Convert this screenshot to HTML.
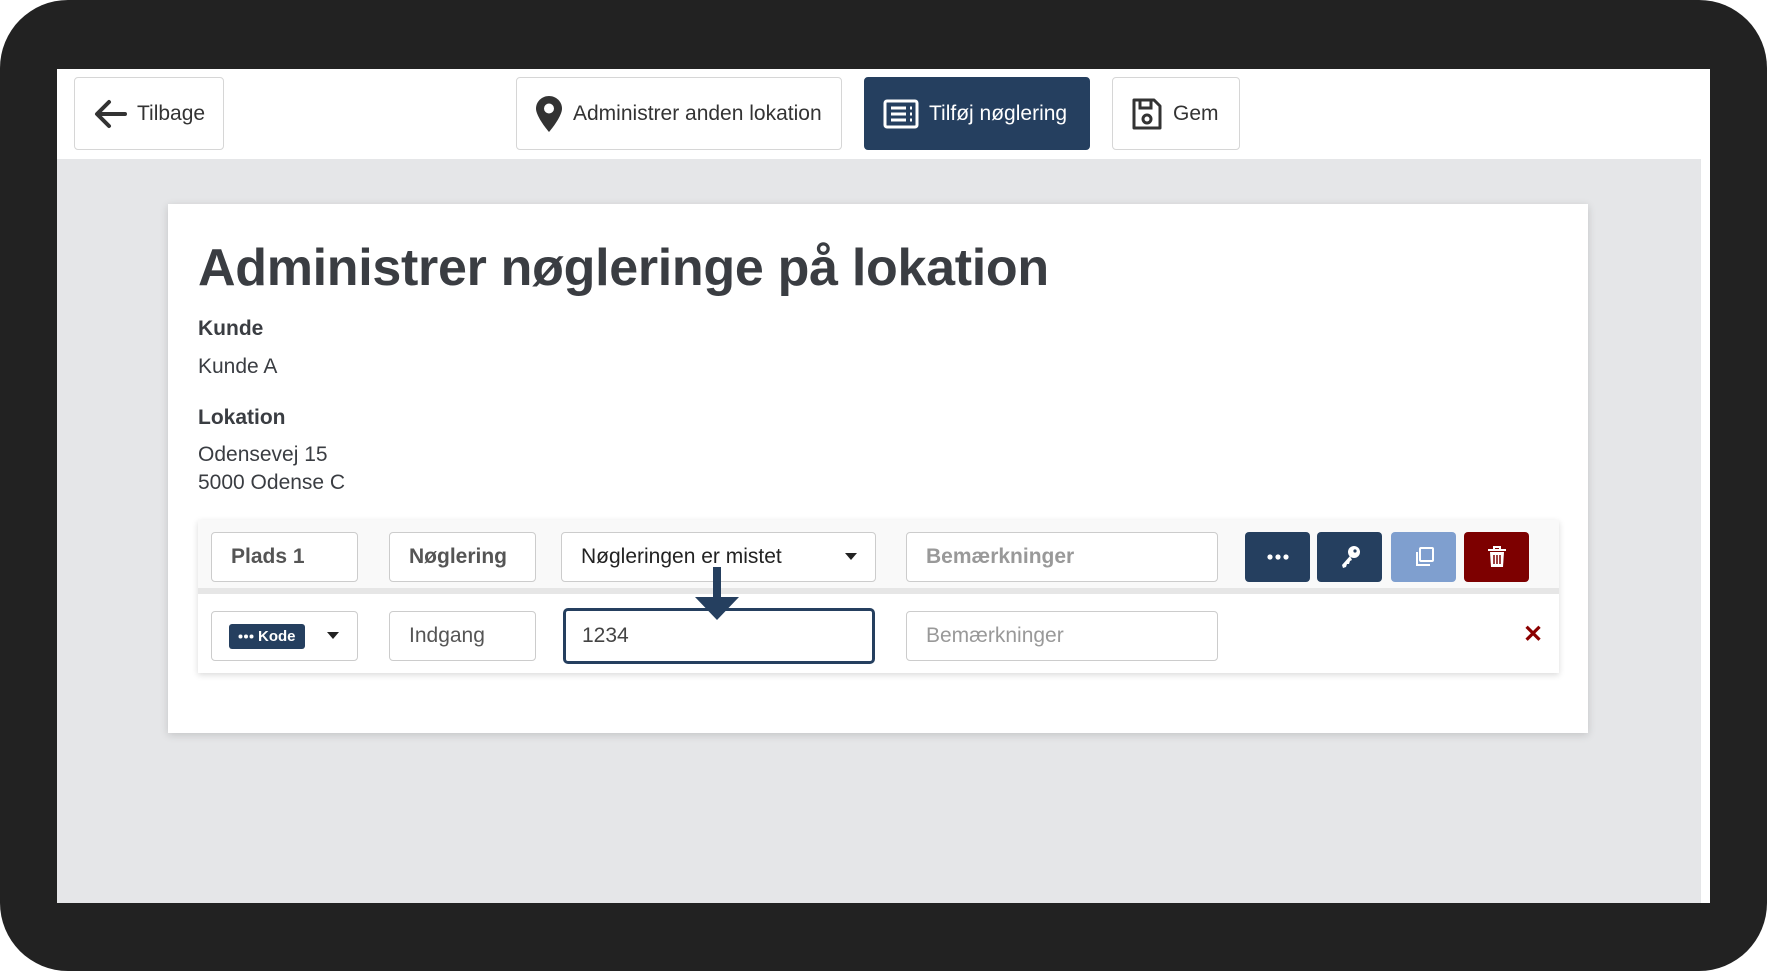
<!DOCTYPE html>
<html><head><meta charset="utf-8"><style>
*{box-sizing:border-box;margin:0;padding:0}
body{width:1767px;height:971px;background:#fff;font-family:"Liberation Sans",Arial,sans-serif;position:relative;overflow:hidden}
.frame{position:absolute;left:0;top:0;width:1767px;height:971px;background:#222;border-radius:68px}
.screen{position:absolute;left:57px;top:69px;width:1653px;height:834px;background:#e5e6e8;overflow:hidden}
.top{position:absolute;left:0;top:0;width:1653px;height:90px;background:#fff}
.rstrip{position:absolute;right:0;top:0;width:9px;height:834px;background:#fff}
.btn{position:absolute;top:8px;height:73px;border:1px solid #d6d6d6;border-radius:4px;background:#fff;display:flex;align-items:center;font-size:21px;color:#333}
.btn svg{margin-right:10px}
.card{position:absolute;left:111px;top:135px;width:1420px;height:529px;background:#fff;box-shadow:0 2px 8px rgba(0,0,0,.15)}
.abs{position:absolute;white-space:nowrap;color:#3a3d42}
.panel{position:absolute;left:30px;top:316px;width:1361px;height:153px;box-shadow:0 2px 6px rgba(0,0,0,.15);background:#fff}
.r1{position:absolute;left:0;top:0;width:1361px;height:74px;background:#f9f9f9;border-bottom:6px solid #e6e6e6}
.inp{position:absolute;height:50px;border:1px solid #ccc;border-radius:4px;background:#fff;display:flex;align-items:center;padding-left:19px;font-size:21px;color:#444}
.ib{position:absolute;top:12px;width:65px;height:50px;border-radius:4px;display:flex;align-items:center;justify-content:center}
</style></head><body>
<div class="frame"></div>
<div class="screen">
 <div class="top"></div>
 <div class="btn" style="left:17px;width:150px;padding-left:18px">
  <svg width="34" height="30" viewBox="0 0 34 30"><path d="M32 15H5M16 3L4 15l12 12" stroke="#333" stroke-width="4" fill="none" stroke-linecap="round" stroke-linejoin="round"/></svg>Tilbage</div>
 <div class="btn" style="left:459px;width:326px;padding-left:18px">
  <svg width="28" height="38" viewBox="0 0 28 38"><path d="M14 1C7 1 1 6.5 1 13.5 1 22 14 37 14 37s13-15 13-23.5C27 6.5 21 1 14 1z" fill="#333"/><circle cx="14" cy="13.5" r="5" fill="#fff"/></svg>Administrer anden lokation</div>
 <div class="btn" style="left:807px;width:226px;background:#253f5f;border-color:#253f5f;color:#fff;padding-left:18px">
  <svg width="36" height="30" viewBox="0 0 36 30"><rect x="2" y="2" width="32" height="26" rx="2" fill="none" stroke="#fff" stroke-width="3"/><path d="M8 9h15M8 15h15M8 21h15M27 9h2M27 15h2M27 21h2" stroke="#fff" stroke-width="3"/></svg>Tilføj nøglering</div>
 <div class="btn" style="left:1055px;width:128px;padding-left:18px">
  <svg width="32" height="34" viewBox="0 0 32 34"><path d="M3 3h20l6 6v22H3z" fill="none" stroke="#333" stroke-width="3" stroke-linejoin="round"/><path d="M9 3v8h11V3" fill="none" stroke="#333" stroke-width="3"/><circle cx="16" cy="22" r="4" fill="none" stroke="#333" stroke-width="3"/></svg>Gem</div>
 <div class="rstrip"></div>
 <div class="card">
  <div class="abs" style="left:30px;top:34px;font-size:52px;font-weight:bold;letter-spacing:-0.3px">Administrer nøgleringe på lokation</div>
  <div class="abs" style="left:30px;top:113px;font-size:21px;font-weight:bold">Kunde</div>
  <div class="abs" style="left:30px;top:151px;font-size:21px">Kunde A</div>
  <div class="abs" style="left:30px;top:202px;font-size:21px;font-weight:bold">Lokation</div>
  <div class="abs" style="left:30px;top:239px;font-size:21px">Odensevej 15</div>
  <div class="abs" style="left:30px;top:267px;font-size:21px">5000 Odense C</div>
  <div class="panel">
   <div class="r1">
    <div class="inp" style="left:13px;top:12px;width:147px;font-weight:bold;color:#555">Plads 1</div>
    <div class="inp" style="left:191px;top:12px;width:147px;font-weight:bold;color:#555">Nøglering</div>
    <div class="inp" style="left:363px;top:12px;width:315px;color:#222">Nøgleringen er mistet<span style="position:absolute;right:18px;top:20px;border:6px solid transparent;border-top:7px solid #222;border-bottom:0"></span></div>
    <div class="inp" style="left:708px;top:12px;width:312px;font-weight:bold;color:#999">Bemærkninger</div>
    <div class="ib" style="left:1047px;background:#253f5f"><svg width="22" height="6"><circle cx="3" cy="3" r="2.6" fill="#fff"/><circle cx="11" cy="3" r="2.6" fill="#fff"/><circle cx="19" cy="3" r="2.6" fill="#fff"/></svg></div>
    <div class="ib" style="left:1119px;background:#253f5f"><svg width="22" height="24" viewBox="0 0 22 24"><circle cx="15" cy="7" r="6" fill="#fff"/><path d="M11 11L3 20l1 3 3-1 1-3 2 0 1-3 2-1z" fill="#fff"/><circle cx="16" cy="6" r="1.6" fill="#253f5f"/></svg></div>
    <div class="ib" style="left:1193px;background:#7f9fcf"><svg width="22" height="22" viewBox="0 0 22 22"><rect x="7" y="2" width="13" height="13" rx="1" fill="none" stroke="#fff" stroke-width="2"/><path d="M4 6v13h13" fill="none" stroke="#fff" stroke-width="2"/></svg></div>
    <div class="ib" style="left:1266px;background:#7d0000"><svg width="20" height="22" viewBox="0 0 20 22"><path d="M1 4h18M7 4V1h6v3" stroke="#fff" stroke-width="2" fill="none"/><path d="M3 6h14l-1 15H4z" fill="#fff"/><path d="M7 9v9M10 9v9M13 9v9" stroke="#7d0000" stroke-width="1.5"/></svg></div>
   </div>
   <div class="inp" style="left:13px;top:91px;width:147px">
    <span style="display:inline-flex;align-items:center;background:#253f5f;color:#fff;font-size:15px;font-weight:bold;height:25px;padding:0 9px;border-radius:3px;margin-left:-2px"><svg width="16" height="5" style="margin-right:4px"><circle cx="2.5" cy="2.5" r="2" fill="#fff"/><circle cx="8" cy="2.5" r="2" fill="#fff"/><circle cx="13.5" cy="2.5" r="2" fill="#fff"/></svg>Kode</span>
    <span style="position:absolute;right:18px;top:20px;border:6px solid transparent;border-top:7px solid #222;border-bottom:0"></span></div>
   <div class="inp" style="left:191px;top:91px;width:147px;color:#555">Indgang</div>
   <div class="inp" style="left:365px;top:88px;width:312px;height:56px;border:3px solid #253f5f;border-radius:5px;padding-left:16px;color:#444">1234</div>
   <div class="inp" style="left:708px;top:91px;width:312px;color:#999">Bemærkninger</div>
   <div class="abs" style="left:1325px;top:100px;font-size:24px;font-weight:bold;color:#8b0000">✕</div>
  </div>
  <svg style="position:absolute;left:525px;top:363px" width="48" height="54" viewBox="0 0 48 54"><path d="M20 0h8v30h18L24 53 2 30h18z" fill="#253f5f"/></svg>
 </div>
</div>
</body></html>
